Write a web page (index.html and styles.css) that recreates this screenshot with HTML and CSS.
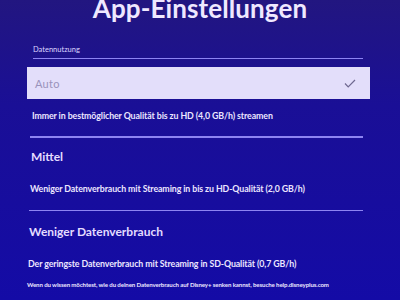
FILE: index.html
```html
<!DOCTYPE html>
<html lang="de">
<head>
<meta charset="utf-8">
<title>App-Einstellungen</title>
<link rel="stylesheet" href="styles.css">
</head>
<body>
<main class="screen">
  <h1 class="title">App-Einstellungen</h1>
  <section class="settings">
    <div class="field-label">Datennutzung</div>
    <div class="option option-selected">
      <span class="option-name">Auto</span>
      <svg class="check" width="12" height="9" viewBox="0 0 12 9"><path d="M1 4.5 L4.2 7.8 L11 1" fill="none" stroke="#6f6890" stroke-width="1.2"/></svg>
    </div>
    <p class="desc">Immer in bestmöglicher Qualität bis zu HD (4,0 GB/h) streamen</p>
    <div class="divider"></div>
    <div class="option-title">Mittel</div>
    <p class="desc desc-mid">Weniger Datenverbrauch mit Streaming in bis zu HD-Qualität (2,0 GB/h)</p>
    <div class="divider divider-low"></div>
    <div class="option-title option-title-low">Weniger Datenverbrauch</div>
    <p class="desc desc-low">Der geringste Datenverbrauch mit Streaming in SD-Qualität (0,7 GB/h)</p>
    <p class="note">Wenn du wissen möchtest, wie du deinen Datenverbrauch auf Disney+ senken kannst, besuche help.disneyplus.com</p>
  </section>
</main>
</body>
</html>
```
FILE: styles.css
```css
html, body {
  margin: 0;
  padding: 0;
}
body {
  width: 400px;
  height: 300px;
  overflow: hidden;
  background: linear-gradient(180deg, #221680 0%, #1a0f96 35%, #140ba6 100%);
  font-family: Lato, "Open Sans", sans-serif;
  color: #ece6ff;
}
.screen {
  display: flex;
  flex-direction: column;
}
.title {
  margin: -6px 0 0;
  text-align: center;
  font-size: 26px;
  line-height: 28px;
  font-weight: 700;
  color: #efe8ff;
  letter-spacing: 0.1px;
}
.settings {
  display: flex;
  flex-direction: column;
  padding: 0 37px 0 31px;
}
.field-label {
  margin: 23px 0 0 2px;
  font-size: 7.5px;
  line-height: 9px;
  color: #ddd6ff;
  padding-bottom: 4px;
  border-bottom: 1.5px solid #8d84f2;
}
.option {
  display: flex;
  align-items: center;
  justify-content: space-between;
}
.option-selected {
  margin: 8px -7px 0 -4px;
  height: 32px;
  padding: 0 14px 0 8px;
  background: #e3defa;
  box-sizing: border-box;
}
.option-name {
  font-size: 11px;
  color: #9a92bb;
  letter-spacing: 0.3px;
}
.check {
  display: block;
}
.desc {
  margin: 11px 0 0 1px;
  font-size: 8.8px;
  line-height: 11px;
  font-weight: 700;
  letter-spacing: -0.1px;
}
.divider {
  margin: 15px 0 0 -1px;
  height: 1.5px;
  background: #8d84f2;
}
.option-title {
  margin-top: 12px;
  font-size: 12px;
  line-height: 14px;
  font-weight: 700;
  color: #e4dcff;
}
.desc-mid {
  margin-top: 19px;
  margin-left: -1px;
}
.divider-low {
  margin-top: 16px;
  margin-left: -2px;
}
.option-title-low {
  margin-top: 14px;
  margin-left: -2px;
}
.desc-low {
  margin-top: 19px;
  margin-left: -3px;
}
.note {
  margin: 12px 0 0 -4px;
  font-size: 6.1px;
  line-height: 8px;
  font-weight: 700;
  letter-spacing: -0.1px;
}
```
